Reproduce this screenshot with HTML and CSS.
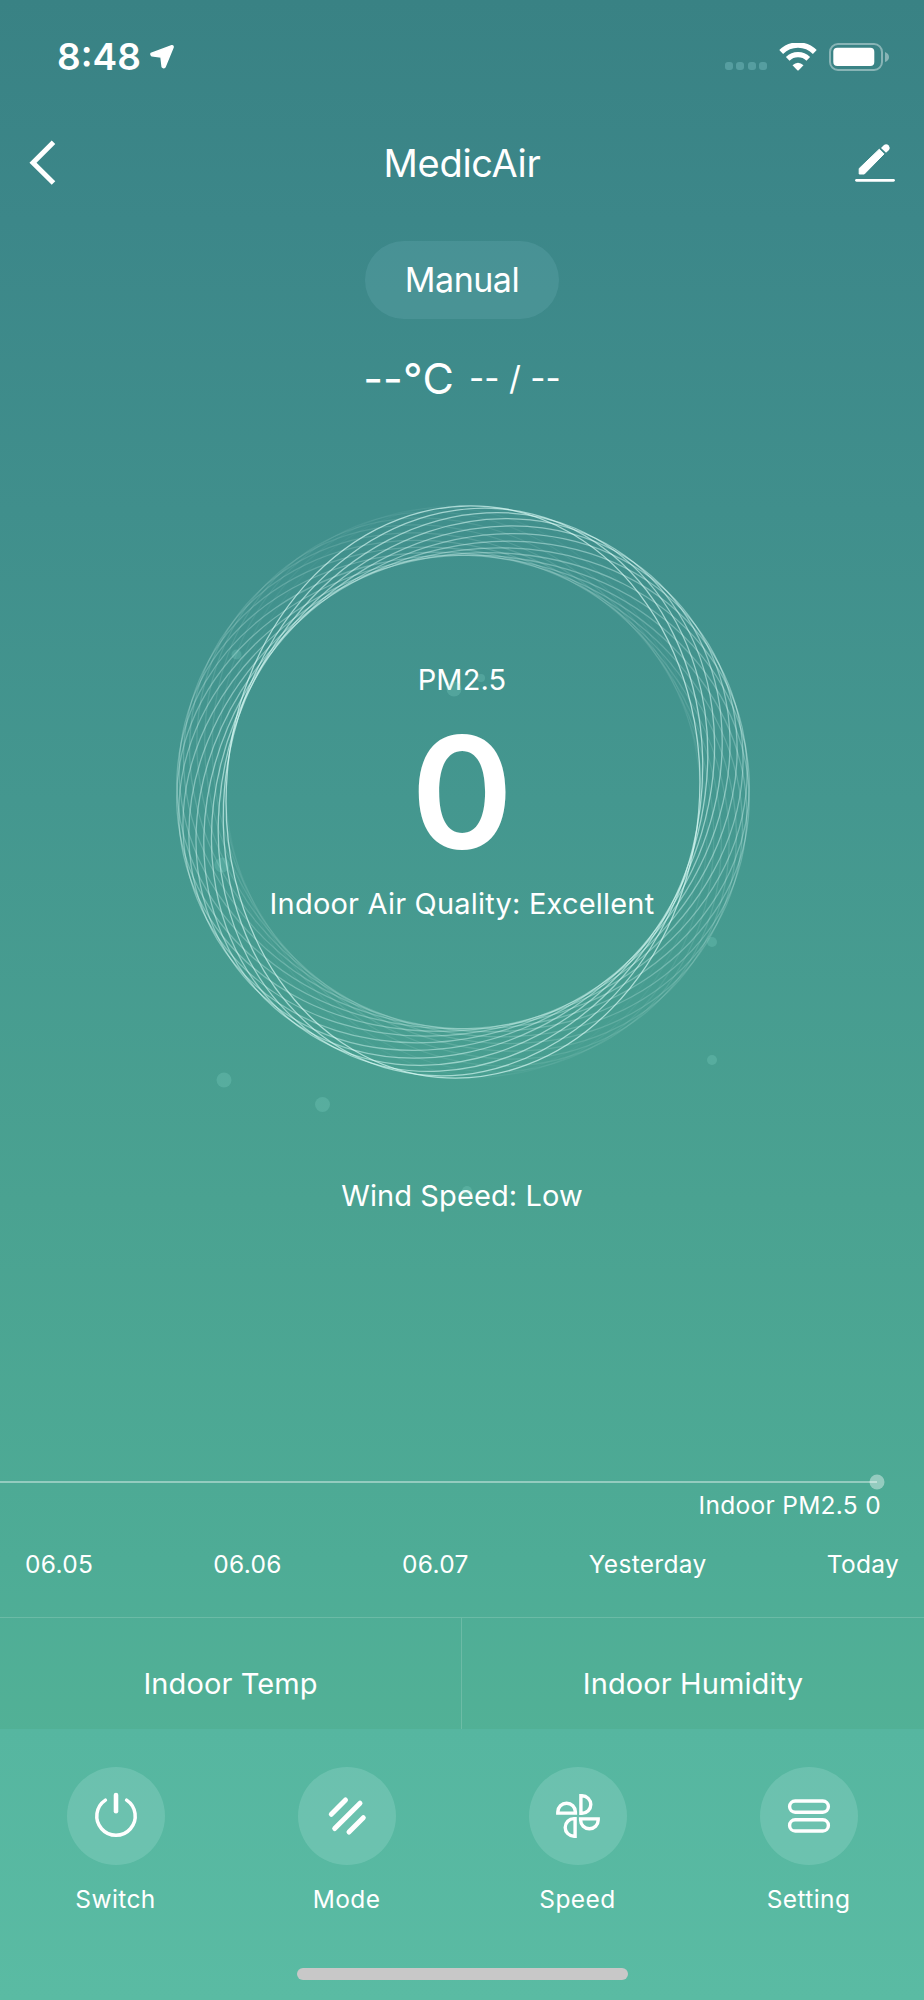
FILE: index.html
```
<!DOCTYPE html>
<html lang="en">
<head>
    <meta charset="UTF-8">
    <meta name="viewport" content="width=device-width, initial-scale=1.0">
    <title>MedicAir</title>
    <link rel="stylesheet" href="styles.css">
</head>
<body>

    <div class="screen">
        <!-- floating dust particles -->
        <svg class="particles" viewBox="0 0 924 2000">
            <circle cx="236.500" cy="654.500" r="5"/>
            <circle cx="222" cy="865" r="7.500"/>
            <circle cx="224" cy="1080" r="7.500"/>
            <circle cx="322.500" cy="1104.500" r="7.500"/>
            <circle cx="712" cy="942" r="5"/>
            <circle cx="712" cy="1060" r="5"/>
            <circle cx="454" cy="689" r="7.500"/>
            <circle cx="481" cy="678" r="4"/>
            <circle cx="467" cy="1191" r="5"/>
        </svg>

        <div class="status-bar">
            <span class="time">8:48</span>
            <svg class="location" width="26" height="26" viewBox="0 0 26 26">
                <path d="M22.800 1.700 L2 9.400 Q1.500 11.300 2.800 11.800 L12 13 L13.200 22.800 Q14.500 24.500 16 23 L24 3.500 Q24.500 1.500 22.800 1.700Z" fill="#fff" stroke="#fff" stroke-width="1.500" stroke-linejoin="round"/>
            </svg>
            <div class="status-icons">
                <div class="signal"><i></i><i></i><i></i><i></i></div>
                <svg class="wifi" width="38" height="28" viewBox="0 0 38 28">
                    <path d="M2.200 9 C11.500 -0.300 26.500 -0.300 35.800 9" fill="none" stroke="#fff" stroke-width="5.400"/>
                    <path d="M8.700 15.800 C14.500 10.200 23.500 10.200 29.300 15.800" fill="none" stroke="#fff" stroke-width="5.200"/>
                    <path d="M13.500 22.300 Q19 17 24.500 22.300 L19.700 27.200 Q19 27.800 18.300 27.200Z" fill="#fff"/>
                </svg>
                <svg class="battery" width="60" height="28" viewBox="0 0 60 28">
                    <rect x="1" y="1" width="52" height="26" rx="8" fill="none" stroke="#fff" stroke-opacity=".4" stroke-width="2"/>
                    <rect x="4.300" y="4.700" width="41" height="18.300" rx="4" fill="#fff"/>
                    <path d="M56 9 Q60 10.500 60 14 Q60 17.500 56 19Z" fill="#fff" fill-opacity=".4"/>
                </svg>
            </div>
        </div>

        <div class="nav">
            <svg width="40" height="50" viewBox="0 0 40 50">
                <path d="M33.500 4.300 L13 24.700 L33.500 45.100" fill="none" stroke="#fff" stroke-width="5"/>
            </svg>
            <h1>MedicAir</h1>
            <svg width="40" height="50" viewBox="0 0 40 50">
                <path d="M4.200 36 V30.500 L24.300 11.200 L29 15.900 L9.300 36Z" fill="#fff" stroke="#fff" stroke-linejoin="round"/>
                <path d="M26 10 L29 7 Q31.500 5.500 33.700 7.500 Q35.500 9.700 34 12 L31 14.700Z" fill="#fff"/>
                <path d="M1.500 42.300 H38.500" stroke="#fff" stroke-width="2.800" stroke-linecap="round"/>
            </svg>
        </div>

        <div class="mode-pill">Manual</div>

        <div class="weather">
            <span class="temp">--°C</span>
            <span class="range">-- / --</span>
        </div>

        <div class="gauge">
            <svg class="rings" width="600" height="600" viewBox="-301 -300 600 600">
                <g fill="none" stroke="#e0fffa" stroke-width="1.300">
                    <ellipse rx="236.500" ry="286.500" transform="rotate(5)" opacity=".66"/>
                    <ellipse rx="236.500" ry="286.500" transform="rotate(14)" opacity=".61"/>
                    <ellipse rx="236.500" ry="286.500" transform="rotate(23)" opacity=".57"/>
                    <ellipse rx="236.500" ry="286.500" transform="rotate(32)" opacity=".53"/>
                    <ellipse rx="236.500" ry="286.500" transform="rotate(41)" opacity=".49"/>
                    <ellipse rx="236.500" ry="286.500" transform="rotate(50)" opacity=".45"/>
                    <ellipse rx="236.500" ry="286.500" transform="rotate(59)" opacity=".42"/>
                    <ellipse rx="236.500" ry="286.500" transform="rotate(68)" opacity=".39"/>
                    <ellipse rx="236.500" ry="286.500" transform="rotate(77)" opacity=".36"/>
                    <ellipse rx="236.500" ry="286.500" transform="rotate(86)" opacity=".32"/>
                    <ellipse rx="236.500" ry="286.500" transform="rotate(95)" opacity=".28"/>
                    <ellipse rx="236.500" ry="286.500" transform="rotate(104)" opacity=".24"/>
                    <ellipse rx="236.500" ry="286.500" transform="rotate(113)" opacity=".2"/>
                    <ellipse rx="236.500" ry="286.500" transform="rotate(122)" opacity=".17"/>
                    <ellipse rx="236.500" ry="286.500" transform="rotate(131)" opacity=".14"/>
                    <ellipse rx="236.500" ry="286.500" transform="rotate(140)" opacity=".12"/>
                    <ellipse rx="236.500" ry="286.500" transform="rotate(149)" opacity=".1"/>
                    <ellipse rx="236.500" ry="286.500" transform="rotate(158)" opacity=".07"/>
                    <ellipse rx="236.500" ry="286.500" transform="rotate(167)" opacity=".05"/>
                    <ellipse rx="236.500" ry="286.500" transform="rotate(176)" opacity=".03"/>
                </g>
            </svg>
            <div class="reading">
                <div class="label">PM2.5</div>
                <div class="value">0</div>
                <div class="label quality">Indoor Air Quality: Excellent</div>
            </div>
        </div>

        <div class="label wind">Wind Speed: Low</div>

        <div class="chart">
            <svg width="924" height="20" viewBox="0 0 924 20">
                <path d="M0 10 H877" stroke="#fff" stroke-opacity=".4" stroke-width="2"/>
                <circle cx="877" cy="10" r="7.500" fill="#fff" fill-opacity=".4"/>
            </svg>
            <div class="chart-label">Indoor PM2.5 0</div>
            <div class="days">
                <span>06.05</span>
                <span>06.06</span>
                <span>06.07</span>
                <span>Yesterday</span>
                <span>Today</span>
            </div>
        </div>

        <div class="stats">
            <div class="stat label">Indoor Temp</div>
            <div class="stat label">Indoor Humidity</div>
        </div>

        <div class="toolbar">
            <div class="tools">
                <div class="tool">
                    <div class="tool-icon">
                        <svg width="50" height="50" viewBox="-25 -25 50 50">
                            <path d="M-10.600 -15.900 A19.200 19.200 0 1 0 10.600 -15.900" stroke-width="3.500"/>
                            <path d="M0 -21 V-4.700" stroke-width="4.600"/>
                        </svg>
                    </div>
                    <span>Switch</span>
                </div>
                <div class="tool">
                    <div class="tool-icon">
                        <svg width="50" height="50" viewBox="-25 -25 50 50">
                            <path d="M-15.700 -1.700 L-1.500 -16 M-12.300 12.500 L13 -12.800 M2 16 L16.300 1.700" stroke-width="5"/>
                        </svg>
                    </div>
                    <span>Mode</span>
                </div>
                <div class="tool">
                    <div class="tool-icon">
                        <svg class="fan" width="50" height="50" viewBox="-25 -25 50 50">
                            <path d="M2.900 -20.200 H4 A8.800 8.800 0 0 1 4 -2.600 H2.900Z"/>
                            <path d="M2.900 -20.200 H4 A8.800 8.800 0 0 1 4 -2.600 H2.900Z" transform="rotate(90)"/>
                            <path d="M2.900 -20.200 H4 A8.800 8.800 0 0 1 4 -2.600 H2.900Z" transform="rotate(180)"/>
                            <path d="M2.900 -20.200 H4 A8.800 8.800 0 0 1 4 -2.600 H2.900Z" transform="rotate(270)"/>
                        </svg>
                    </div>
                    <span>Speed</span>
                </div>
                <div class="tool">
                    <div class="tool-icon">
                        <svg width="50" height="50" viewBox="-25 -25 50 50">
                            <rect x="-19.400" y="-15" width="38.800" height="11.200" rx="5.600" stroke-width="3.400"/>
                            <rect x="-19.400" y="3.800" width="38.800" height="11.200" rx="5.600" stroke-width="3.400"/>
                        </svg>
                    </div>
                    <span>Setting</span>
                </div>
            </div>
            <div class="home-indicator"></div>
        </div>
    </div>

</body>
</html>
```
FILE: styles.css
```
* {
    box-sizing: border-box;
}

body {
    margin: 0;
    font-family: Inter, "Liberation Sans", sans-serif;
    color: #fff;
}

.screen {
    position: relative;
    display: flex;
    flex-direction: column;
    width: 924px;
    height: 2000px;
    overflow: hidden;
    background: linear-gradient(#398284 0%, #3c8789 11%, #44978f 40%, #4aa291 60%, #4eac96 78%, #52b196 87%);
}

.particles {
    position: absolute;
    top: 0;
    left: 0;
    width: 924px;
    height: 2000px;
    fill: rgba(140, 225, 210, 0.22);
}

.status-bar {
    display: flex;
    align-items: center;
    height: 113px;
    padding: 0 35px 0 57px;
}

.time {
    font-size: 37px;
    font-weight: 600;
}

.location {
    margin-left: 8px;
}

.status-icons {
    display: flex;
    align-items: center;
    margin-left: auto;
}

.signal {
    display: flex;
    gap: 3.500px;
    padding-top: 19px;
    margin-right: 12px;
}

.signal i {
    width: 8px;
    height: 8px;
    border-radius: 3px;
    background: rgba(160, 225, 230, 0.28);
}

.battery {
    margin-left: 12px;
}

.nav {
    display: flex;
    align-items: center;
    justify-content: space-between;
    height: 100px;
    padding: 0 29px 0 20px;
}

.nav h1 {
    margin: 0 0 0 9px;
    font-size: 38px;
    font-weight: 400;
    letter-spacing: -0.3px;
}

.mode-pill {
    align-self: center;
    width: 194px;
    height: 78px;
    margin-top: 28px;
    border-radius: 39px;
    background: rgba(190, 235, 255, 0.1);
    font-size: 34px;
    font-weight: 400;
    letter-spacing: -0.5px;
    line-height: 77px;
    text-align: center;
}

.weather {
    display: flex;
    align-items: center;
    justify-content: center;
    gap: 15px;
    height: 60px;
    margin-top: 29px;
}

.temp {
    font-size: 43px;
    letter-spacing: 0.2px;
}

.range {
    font-size: 33px;
    letter-spacing: 0.1px;
}

.gauge {
    display: grid;
    justify-content: center;
    height: 600px;
    margin-top: 84px;
}

.rings,
.reading {
    grid-area: 1 / 1;
}

.reading {
    padding-top: 168px;
    text-align: center;
}

.label {
    font-size: 29px;
    font-weight: 400;
    line-height: 40px;
    letter-spacing: 0.1px;
    text-align: center;
}

.value {
    height: 184px;
    font-size: 155px;
    font-weight: 600;
    line-height: 184px;
}

.quality {
    letter-spacing: 0.2px;
}

.wind {
    margin-top: 84px;
}

.chart {
    height: 401px;
    padding-top: 256px;
    font-size: 24.500px;
    font-weight: 400;
    line-height: 30px;
    letter-spacing: 0.3px;
}

.chart svg {
    display: block;
}

.chart-label {
    padding-right: 43px;
    margin-top: -2px;
    text-align: right;
}

.days {
    display: flex;
    justify-content: space-between;
    margin-top: 29px;
    padding: 0 25px;
}

.stats {
    display: grid;
    grid-template-columns: 462px 462px;
    height: 112px;
    border-top: 1px solid rgba(255, 255, 255, 0.16);
}

.stat {
    padding-top: 46px;
}

.stat:first-child {
    border-right: 1px solid rgba(255, 255, 255, 0.16);
}

.toolbar {
    height: 271px;
    padding-top: 38px;
    background: linear-gradient(#56b6a0, #5abba3);
}

.tools {
    display: grid;
    grid-template-columns: repeat(4, 231px);
}

.tool {
    display: flex;
    flex-direction: column;
    align-items: center;
    gap: 19px;
    font-size: 24.500px;
    font-weight: 400;
    line-height: 30px;
    letter-spacing: 0.4px;
}

.tool-icon {
    display: flex;
    align-items: center;
    justify-content: center;
    width: 98px;
    height: 98px;
    border-radius: 50%;
    background: rgba(230, 255, 255, 0.15);
}

.tool-icon svg {
    fill: none;
    stroke: #fff;
    stroke-linecap: round;
}

.tool-icon .fan {
    stroke-width: 3.400px;
    stroke-linecap: butt;
}

.home-indicator {
    width: 331px;
    height: 12px;
    margin: 54px auto 0;
    border-radius: 6px;
    background: #c8c8c8;
}
```
